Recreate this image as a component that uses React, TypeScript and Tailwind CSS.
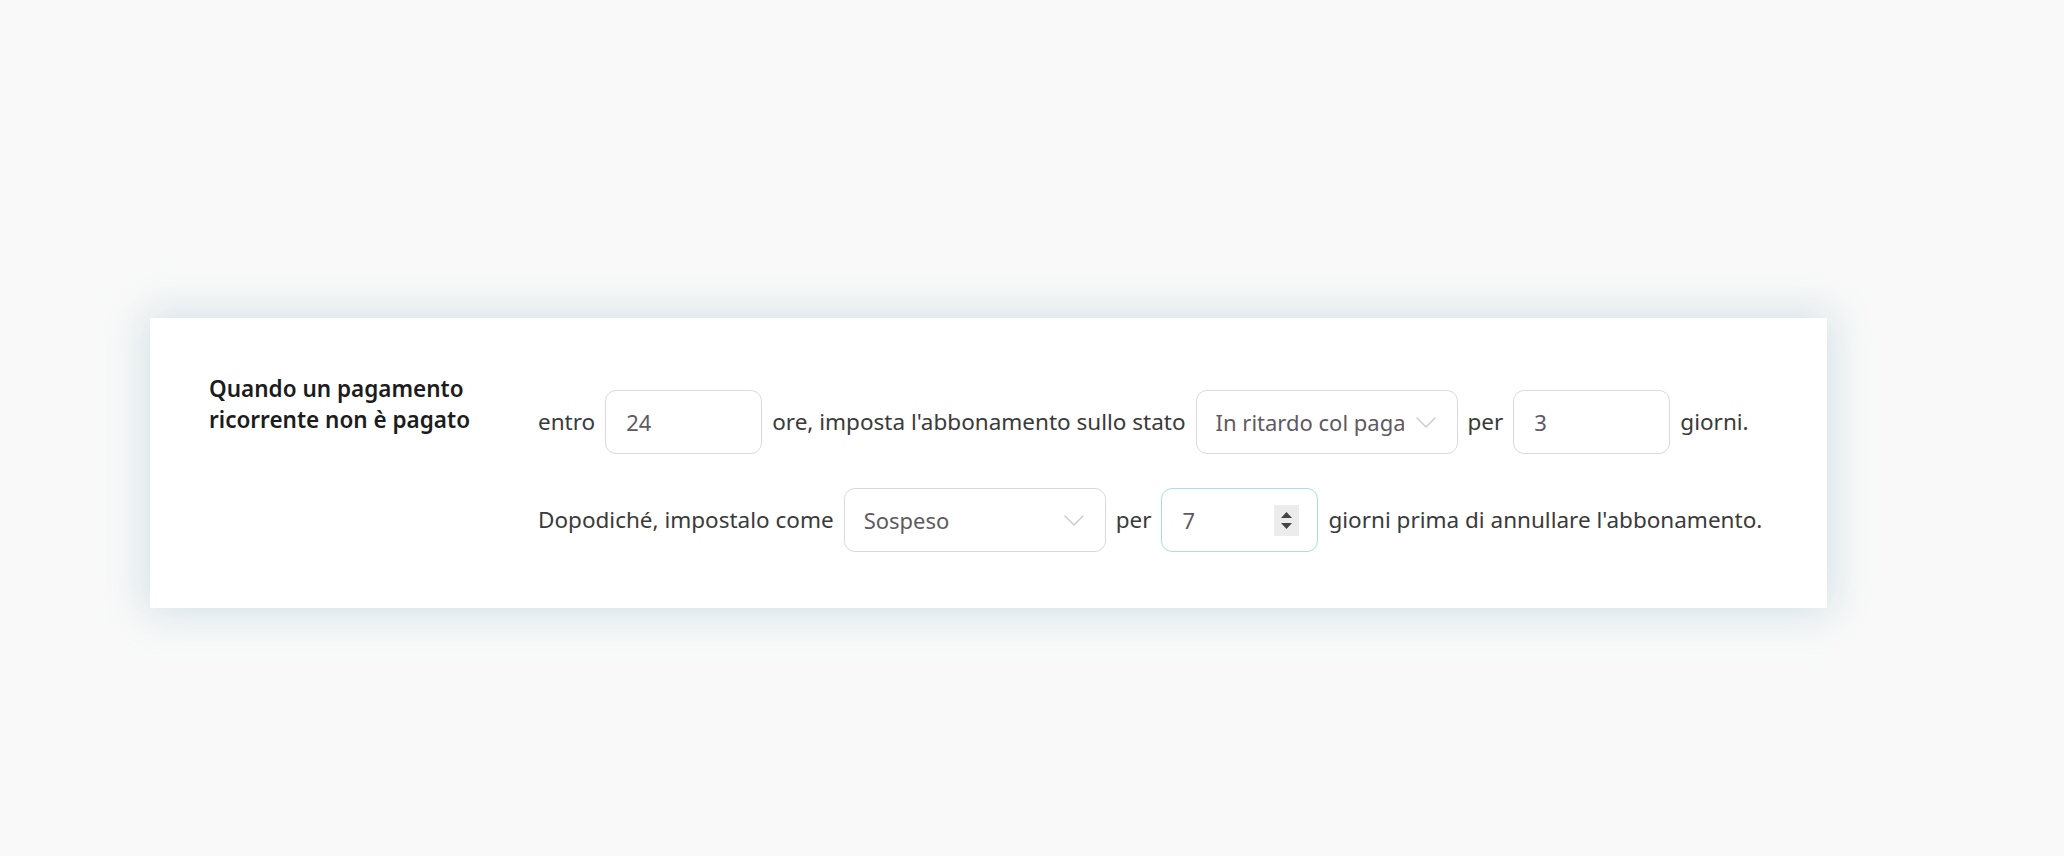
import React from 'react';

const font = { fontFamily: '"Noto Sans", "Open Sans", sans-serif' };

function Chevron() {
  return (
    <svg width="20" height="11" viewBox="0 0 20 11" fill="none" className="shrink-0">
      <path d="M1 1l9 9 9-9" stroke="#c9c9c9" strokeWidth="1.4" strokeLinecap="round" strokeLinejoin="round" />
    </svg>
  );
}

function TextBox({ value, focused, spinner }: { value: string; focused?: boolean; spinner?: boolean }) {
  return (
    <div
      className={`w-[157px] h-[64px] shrink-0 rounded-[11px] border bg-white flex items-center pl-[20px] pr-[18px] text-[22px] text-[#5f5a62] ${
        focused ? 'border-[#a9dcef]' : 'border-[#dadada]'
      }`}
    >
      <span className="flex-1">{value}</span>
      {spinner && (
        <div className="w-[25px] h-[31px] bg-[#ececec] flex flex-col items-center justify-center gap-[5px]">
          <svg width="11" height="6" viewBox="0 0 11 6"><path d="M0 6L5.5 0L11 6Z" fill="#444" /></svg>
          <svg width="11" height="6" viewBox="0 0 11 6"><path d="M0 0L5.5 6L11 0Z" fill="#444" /></svg>
        </div>
      )}
    </div>
  );
}

function SelectBox({ value }: { value: string }) {
  return (
    <div className="w-[262px] h-[64px] shrink-0 rounded-[11px] border border-[#dadada] bg-white flex items-center pl-[19px] pr-[21px] text-[22px] text-[#5f5a62]">
      <span className="w-[188px] overflow-hidden whitespace-nowrap">{value}</span>
      <div className="flex-1 flex justify-end">
        <Chevron />
      </div>
    </div>
  );
}

export default function App() {
  return (
    <div className="min-h-[856px] w-full bg-[#f9f9f9] pt-[318px]" style={font}>
      <div className="ml-[150px] w-[1677px] h-[290px] bg-white shadow-[0_0_38px_6px_rgba(170,200,210,0.45)] flex pl-[59px] pt-[55px]">
        <div className="w-[329px] shrink-0 text-[22.5px] leading-[31px] font-semibold text-[#1c1c1c]">
          Quando un pagamento
          <br />
          ricorrente non è pagato
        </div>
        <div className="flex flex-col gap-[34px] pt-[17px] text-[22.5px] text-[#3a3a3a]">
          <div className="flex items-center gap-[10px]">
            <span>entro</span>
            <TextBox value="24" />
            <span>ore, imposta l'abbonamento sullo stato</span>
            <SelectBox value="In ritardo col pagamento" />
            <span>per</span>
            <TextBox value="3" />
            <span>giorni.</span>
          </div>
          <div className="flex items-center gap-[10px]">
            <span>Dopodiché, impostalo come</span>
            <SelectBox value="Sospeso" />
            <span>per</span>
            <TextBox value="7" focused spinner />
            <span>giorni prima di annullare l'abbonamento.</span>
          </div>
        </div>
      </div>
    </div>
  );
}
